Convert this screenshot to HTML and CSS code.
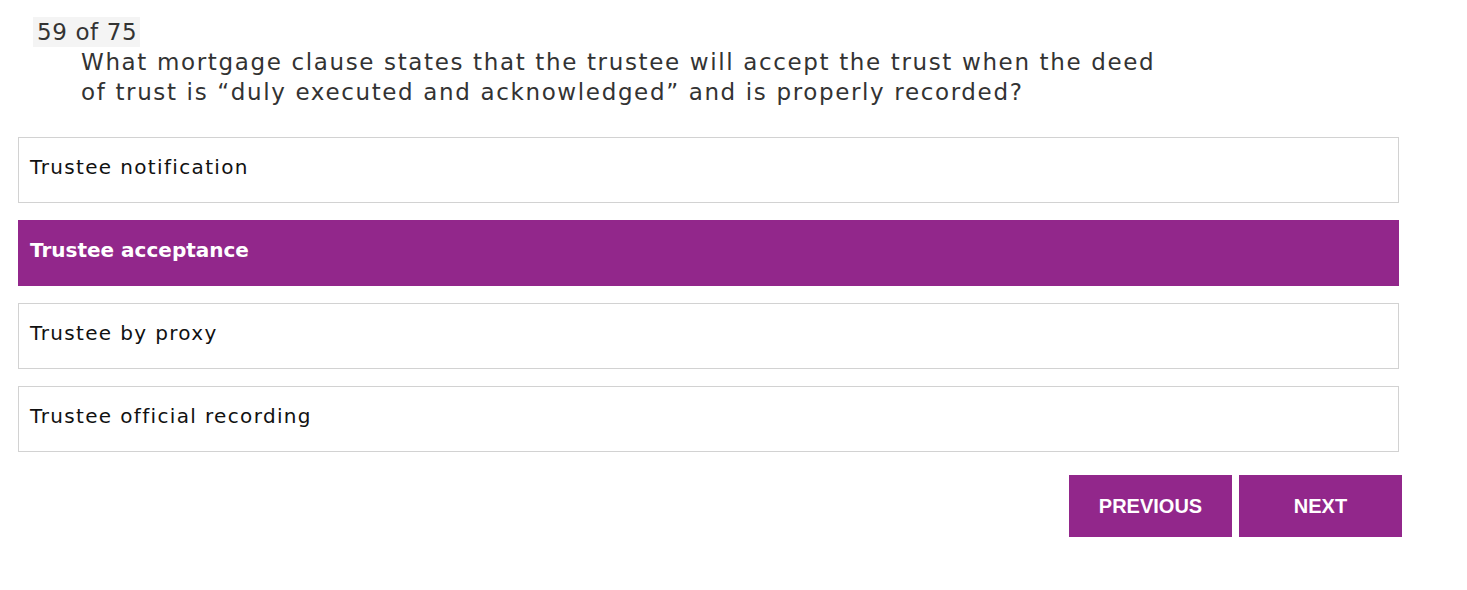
FILE: index.html
```html
<!DOCTYPE html>
<html>
<head>
<meta charset="utf-8">
<link rel="stylesheet" href="styles.css">
</head>
<body>
<div class="quiz">
  <div class="head">
    <span class="counter">59 of 75</span>
    <p class="question">What mortgage clause states that the trustee will accept the trust when the deed of trust is “duly executed and acknowledged” and is properly recorded?</p>
  </div>
  <ul class="options">
    <li class="option">Trustee notification</li>
    <li class="option selected">Trustee acceptance</li>
    <li class="option">Trustee by proxy</li>
    <li class="option">Trustee official recording</li>
  </ul>
  <div class="nav">
    <button class="btn">PREVIOUS</button>
    <button class="btn">NEXT</button>
  </div>
</div>
</body>
</html>
```
FILE: styles.css
```css
html, body {
  margin: 0;
  padding: 0;
  background: #fff;
}
.quiz {
  padding: 17px 0 0 18px;
  width: 1381px;
  font-family: "DejaVu Sans", sans-serif;
}
.head {
  padding-left: 15px;
}
.counter {
  display: inline-block;
  background: #f4f4f4;
  color: #333;
  font-size: 23px;
  letter-spacing: 0.6px;
  line-height: 30px;
  padding: 0 3px 0 4px;
}
.question {
  margin: 0 0 0 48px;
  max-width: 1100px;
  color: #333;
  font-size: 23px;
  letter-spacing: 1.64px;
  line-height: 30px;
}
.options {
  list-style: none;
  margin: 30px 0 0 0;
  padding: 0;
  display: flex;
  flex-direction: column;
  gap: 17px;
}
.option {
  border: 1px solid #d2d2d2;
  box-sizing: border-box;
  height: 66px;
  padding: 16px 11px;
  font-size: 20px;
  letter-spacing: 1.35px;
  line-height: 26px;
  color: #111;
}
.option.selected {
  background: #92278b;
  border-color: #92278b;
  color: #fff;
  font-weight: bold;
  letter-spacing: 0;
}
.nav {
  display: flex;
  justify-content: flex-end;
  gap: 7px;
  margin: 23px -3px 0 0;
}
.btn {
  width: 163px;
  height: 62px;
  background: #92278b;
  color: #fff;
  border: none;
  font-family: "Liberation Sans", Arial, sans-serif;
  font-weight: bold;
  font-size: 20px;
  padding: 0;
}
```
